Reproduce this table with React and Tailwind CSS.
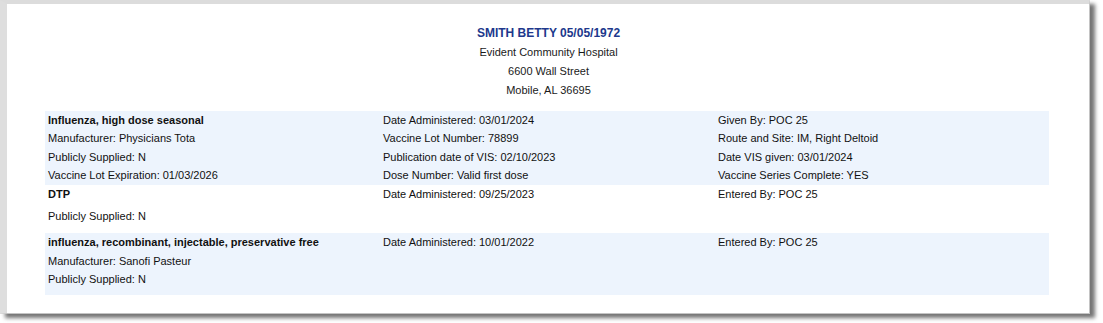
import React from "react";

const vaccines = [
  {
    name: "Influenza, high dose seasonal",
    shaded: true,
    rows: [
      ["Manufacturer: Physicians Tota", "Vaccine Lot Number: 78899", "Route and Site: IM, Right Deltoid"],
      ["Publicly Supplied: N", "Publication date of VIS: 02/10/2023", "Date VIS given: 03/01/2024"],
      ["Vaccine Lot Expiration: 01/03/2026", "Dose Number: Valid first dose", "Vaccine Series Complete: YES"],
    ],
    head: ["Date Administered: 03/01/2024", "Given By: POC 25"],
  },
  {
    name: "DTP",
    shaded: false,
    gap: true,
    rows: [["Publicly Supplied: N", "", ""]],
    head: ["Date Administered: 09/25/2023", "Entered By: POC 25"],
  },
  {
    name: "influenza, recombinant, injectable, preservative free",
    shaded: true,
    rows: [
      ["Manufacturer: Sanofi Pasteur", "", ""],
      ["Publicly Supplied: N", "", ""],
    ],
    head: ["Date Administered: 10/01/2022", "Entered By: POC 25"],
    tail: true,
  },
];

function Row({ cells, bold }) {
  return (
    <div className="grid grid-cols-[335px_335px_1fr] h-[18.4px] items-center px-[3px]">
      {cells.map((c, i) => (
        <div key={i} className={i === 0 && bold ? "font-bold" : ""}>
          {c}
        </div>
      ))}
    </div>
  );
}

export default function App() {
  return (
    <div className="w-[1103px] h-[323px] bg-white overflow-hidden" style={{ fontFamily: '"Liberation Sans", Arial, sans-serif' }}>
      <div className="w-[1090px] h-[314px] bg-white border-l-[7px] border-t-[4px] border-r border-b border-l-[#dedede] border-t-[#dcdcdc] border-r-[#c4c4c4] border-b-[#c4c4c4] shadow-[5px_4px_4px_rgba(0,0,0,0.55)]">
        {/* patient header */}
        <div className="flex flex-col items-center pt-[20px] text-[11px] text-[#1a1a1a] leading-[19px] pl-[1px]">
          <div className="text-[12px] font-bold text-[#20388c] leading-[18px] mb-[1px]">SMITH BETTY 05/05/1972</div>
          <div>Evident Community Hospital</div>
          <div>6600 Wall Street</div>
          <div>Mobile, AL 36695</div>
        </div>

        {/* immunization list */}
        <div className="ml-[38px] w-[1004px] mt-[11px] text-[11px] text-[#111]">
          {vaccines.map((v, i) => (
            <div key={i} className={v.shaded ? "bg-[#edf4fd]" : ""}>
              <Row cells={[v.name, v.head[0], v.head[1]]} bold />
              {v.gap && <div className="h-[4px]" />}
              {v.rows.map((r, j) => (
                <Row key={j} cells={r} />
              ))}
              {v.gap && <div className="h-[8px]" />}
              {v.tail && <div className="h-[6px]" />}
            </div>
          ))}
        </div>
      </div>
    </div>
  );
}
